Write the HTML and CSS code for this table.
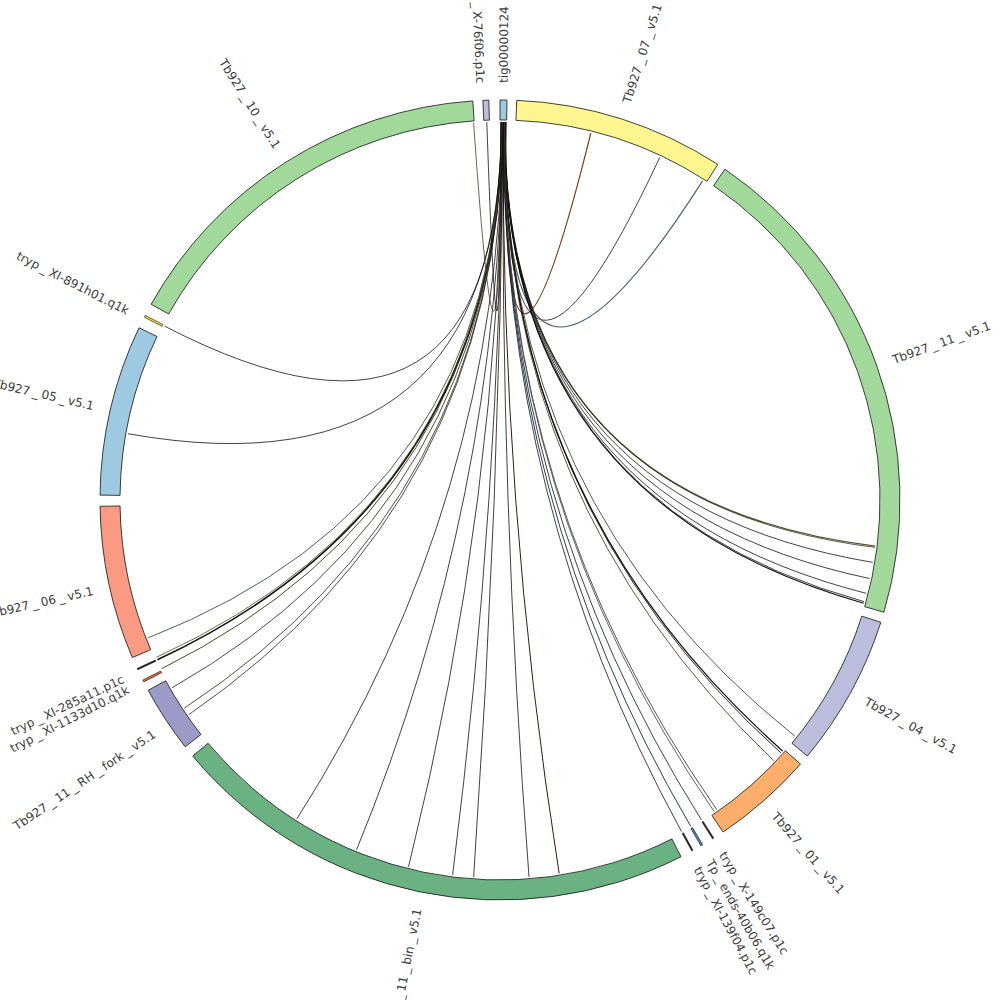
FILE: index.html
```html
<!DOCTYPE html>
<html lang="en">
<head>
<meta charset="utf-8">
<title>Circos plot</title>
<link rel="stylesheet" href="styles.css">
</head>
<body>
<svg class="canvas" id="circos" width="1000" height="1000" viewBox="0 0 1000 1000" xmlns="http://www.w3.org/2000/svg">
  <g id="links" class="links"></g>
  <g id="ideograms" class="ideograms"></g>
  <g class="labels">
    <text class="label" transform="rotate(-89.5 500 500)" x="917" y="500">tig00000124</text>
    <text class="label" transform="rotate(-72.3 500 500)" x="917" y="500">Tb927<tspan dx="3">_</tspan><tspan dx="3">07</tspan><tspan dx="3">_</tspan><tspan dx="3">v5.1</tspan></text>
    <text class="label" transform="rotate(-19.6 500 500)" x="917" y="500">Tb927<tspan dx="3">_</tspan><tspan dx="3">11</tspan><tspan dx="3">_</tspan><tspan dx="3">v5.1</tspan></text>
    <text class="label" transform="rotate(28.8 500 500)" x="917" y="500">Tb927<tspan dx="3">_</tspan><tspan dx="3">04</tspan><tspan dx="3">_</tspan><tspan dx="3">v5.1</tspan></text>
    <text class="label" transform="rotate(48.9 500 500)" x="917" y="500">Tb927<tspan dx="3">_</tspan><tspan dx="3">01</tspan><tspan dx="3">_</tspan><tspan dx="3">v5.1</tspan></text>
    <text class="label" transform="rotate(57.8 500 500)" x="917" y="500">tryp<tspan dx="3">_</tspan><tspan dx="3">X-149c07.p1c</tspan></text>
    <text class="label" transform="rotate(59.9 500 500)" x="917" y="500">Tp<tspan dx="3">_</tspan><tspan dx="3">ends-40b06.q1k</tspan></text>
    <text class="label" transform="rotate(61.8 500 500)" x="917" y="500">tryp<tspan dx="3">_</tspan><tspan dx="3">XI-139f04.p1c</tspan></text>

    <text class="label label-left" transform="rotate(-78.6 500 500)" x="83" y="500">Tb927<tspan dx="3">_</tspan><tspan dx="3">11</tspan><tspan dx="3">_</tspan><tspan dx="3">bin</tspan><tspan dx="3">_</tspan><tspan dx="3">v5.1</tspan></text>
    <text class="label label-left" transform="rotate(-34 500 500)" x="83" y="500">Tb927<tspan dx="3">_</tspan><tspan dx="3">11</tspan><tspan dx="3">_</tspan><tspan dx="3">RH</tspan><tspan dx="3">_</tspan><tspan dx="3">fork</tspan><tspan dx="3">_</tspan><tspan dx="3">v5.1</tspan></text>
    <text class="label label-left" transform="rotate(-27 500 500)" x="83" y="500">tryp<tspan dx="3">_</tspan><tspan dx="3">XI-1133d10.q1k</tspan></text>
    <text class="label label-left" transform="rotate(-25.4 500 500)" x="83" y="500">tryp<tspan dx="3">_</tspan><tspan dx="3">XI-285a11.p1c</tspan></text>
    <text class="label label-left" transform="rotate(-12.6 500 500)" x="83" y="500">Tb927<tspan dx="3">_</tspan><tspan dx="3">06</tspan><tspan dx="3">_</tspan><tspan dx="3">v5.1</tspan></text>
    <text class="label label-left" transform="rotate(13 500 500)" x="83" y="500">Tb927<tspan dx="3">_</tspan><tspan dx="3">05</tspan><tspan dx="3">_</tspan><tspan dx="3">v5.1</tspan></text>
    <text class="label label-left" transform="rotate(26.9 500 500)" x="83" y="500">tryp<tspan dx="3">_</tspan><tspan dx="3">XI-891h01.q1k</tspan></text>
    <text class="label label-left" transform="rotate(57.7 500 500)" x="83" y="500">Tb927<tspan dx="3">_</tspan><tspan dx="3">10</tspan><tspan dx="3">_</tspan><tspan dx="3">v5.1</tspan></text>
    <text class="label label-left" transform="rotate(87.3 500 500)" x="83" y="500">tryp<tspan dx="3">_</tspan><tspan dx="3">X-76f06.p1c</tspan></text>
  </g>
</svg>
<script src="script.js"></script>
</body>
</html>
```

FILE: styles.css
```css
html, body {
  margin: 0;
  padding: 0;
  background: #ffffff;
}

.canvas {
  display: block;
  width: 1000px;
  height: 1000px;
}

.ideogram {
  stroke: #111111;
  stroke-width: 0.8;
  stroke-linejoin: miter;
}

.ideogram-tiny {
  stroke-width: 0.6;
}

.link {
  fill: none;
  stroke-linecap: butt;
}

.label,
.label tspan {
  font-family: "DejaVu Sans", "Liberation Sans", sans-serif;
  font-size: 12px;
  fill: #3c3c3c;
  dominant-baseline: central;
}

.label-left {
  text-anchor: end;
}
```

FILE: script.js
```js
(function () {
  var NS = 'http://www.w3.org/2000/svg';
  var cx = 500, cy = 500, R0 = 380, R1 = 400, RL = 378;

  function pt(r, a) {
    var t = a * Math.PI / 180;
    return [cx + r * Math.sin(t), cy - r * Math.cos(t)];
  }
  function f(n) { return n.toFixed(2); }

  var segments = [
    ['Tb927_07_v5.1', 2.4, 33.0, '#fff68f'],
    ['Tb927_11_v5.1', 34.2, 106.3, '#a1d99b'],
    ['Tb927_04_v5.1', 107.8, 129.8, '#bcbddc'],
    ['Tb927_01_v5.1', 131.3, 146.1, '#fdae6b'],
    ['tryp_X-149c07.p1c', 147.7, 147.9, '#222222'],
    ['Tp_ends-40b06.q1k', 149.55, 149.85, '#4a86c0'],
    ['tryp_XI-139f04.p1c', 151.15, 151.35, '#2a2a18'],
    ['Tb927_11_bin_v5.1', 153.1, 230.2, '#6bb283'],
    ['Tb927_11_RH_fork_v5.1', 231.9, 241.6, '#9e9ac8'],
    ['tryp_XI-1133d10.q1k', 242.95, 243.25, '#e6673a'],
    ['tryp_XI-285a11.p1c', 244.9, 245.1, '#1a1a1a'],
    ['Tb927_06_v5.1', 246.8, 269.1, '#fb9a82'],
    ['Tb927_05_v5.1', 270.7, 295.5, '#9ecae1'],
    ['tryp_XI-891h01.q1k', 297.2, 297.5, '#e8dc40'],
    ['Tb927_10_v5.1', 299.3, 356.1, '#a1d99b'],
    ['tryp_X-76f06.p1c', 357.55, 358.4, '#bcbddc'],
    ['tig00000124', 0.0, 1.0, '#9ecae1']
  ];

  var links = [
    [13.9, 0.92, '#7a3b1e', 1.2],
    [25.0, 0.88, '#111111', 0.8],
    [32.4, 0.85, '#4a5a6a', 1.1],
    [97.0, 0.80, '#55552a', 1.3],
    [97.2, 0.79, '#111111', 0.7],
    [99.5, 0.77, '#111111', 0.8],
    [102.0, 0.75, '#111111', 0.8],
    [104.3, 0.73, '#111111', 0.8],
    [105.6, 0.71, '#111111', 0.8],
    [105.85, 0.70, '#111111', 1.1],
    [128.7, 0.68, '#3d4a3d', 0.9],
    [131.6, 0.66, '#111111', 1.2],
    [132.0, 0.65, '#111111', 0.9],
    [133.6, 0.63, '#3a2415', 0.8],
    [145.0, 0.61, '#3a2415', 0.8],
    [145.5, 0.60, '#445566', 0.9],
    [147.8, 0.58, '#111111', 0.8],
    [149.7, 0.56, '#2a3f5a', 1.0],
    [151.3, 0.54, '#111111', 0.8],
    [171.0, 0.52, '#3a1a10', 1.0],
    [175.6, 0.50, '#111111', 0.8],
    [184.0, 0.48, '#111111', 0.8],
    [187.2, 0.46, '#111111', 0.8],
    [194.0, 0.44, '#111111', 0.8],
    [202.3, 0.42, '#111111', 0.8],
    [212.5, 0.40, '#111111', 0.8],
    [235.4, 0.38, '#222222', 0.8],
    [236.6, 0.36, '#2a2010', 0.8],
    [240.2, 0.34, '#2a1a10', 0.8],
    [243.5, 0.32, '#4a4a20', 1.0],
    [245.0, 0.30, '#111111', 1.6],
    [245.4, 0.29, '#4a4a20', 0.8],
    [248.6, 0.27, '#3d4d3d', 0.9],
    [280.1, 0.24, '#111111', 0.8],
    [297.4, 0.20, '#111111', 0.8],
    [356.0, 0.14, '#5a3520', 0.8],
    [358.0, 0.10, '#111111', 0.8]
  ];

  var gLinks = document.getElementById('links');
  links.forEach(function (l) {
    var p1 = pt(RL, l[0]);
    var p2 = pt(RL, l[1]);
    var path = document.createElementNS(NS, 'path');
    path.setAttribute('class', 'link');
    path.setAttribute('d', 'M' + f(p1[0]) + ',' + f(p1[1]) + ' Q' + cx + ',' + cy + ' ' + f(p2[0]) + ',' + f(p2[1]));
    path.setAttribute('stroke', l[2]);
    path.setAttribute('stroke-width', l[3]);
    gLinks.appendChild(path);
  });

  var gIdeo = document.getElementById('ideograms');
  segments.forEach(function (s) {
    var a1 = s[1], a2 = s[2];
    var large = (a2 - a1) > 180 ? 1 : 0;
    var o1 = pt(R1, a1), o2 = pt(R1, a2), i2 = pt(R0, a2), i1 = pt(R0, a1);
    var d = 'M' + f(o1[0]) + ',' + f(o1[1]) +
      ' A' + R1 + ',' + R1 + ' 0 ' + large + ' 1 ' + f(o2[0]) + ',' + f(o2[1]) +
      ' L' + f(i2[0]) + ',' + f(i2[1]) +
      ' A' + R0 + ',' + R0 + ' 0 ' + large + ' 0 ' + f(i1[0]) + ',' + f(i1[1]) + ' Z';
    var path = document.createElementNS(NS, 'path');
    path.setAttribute('class', (a2 - a1) < 0.5 ? 'ideogram ideogram-tiny' : 'ideogram');
    path.setAttribute('d', d);
    path.setAttribute('fill', s[3]);
    var title = document.createElementNS(NS, 'title');
    title.textContent = s[0];
    path.appendChild(title);
    gIdeo.appendChild(path);
  });
})();
```
